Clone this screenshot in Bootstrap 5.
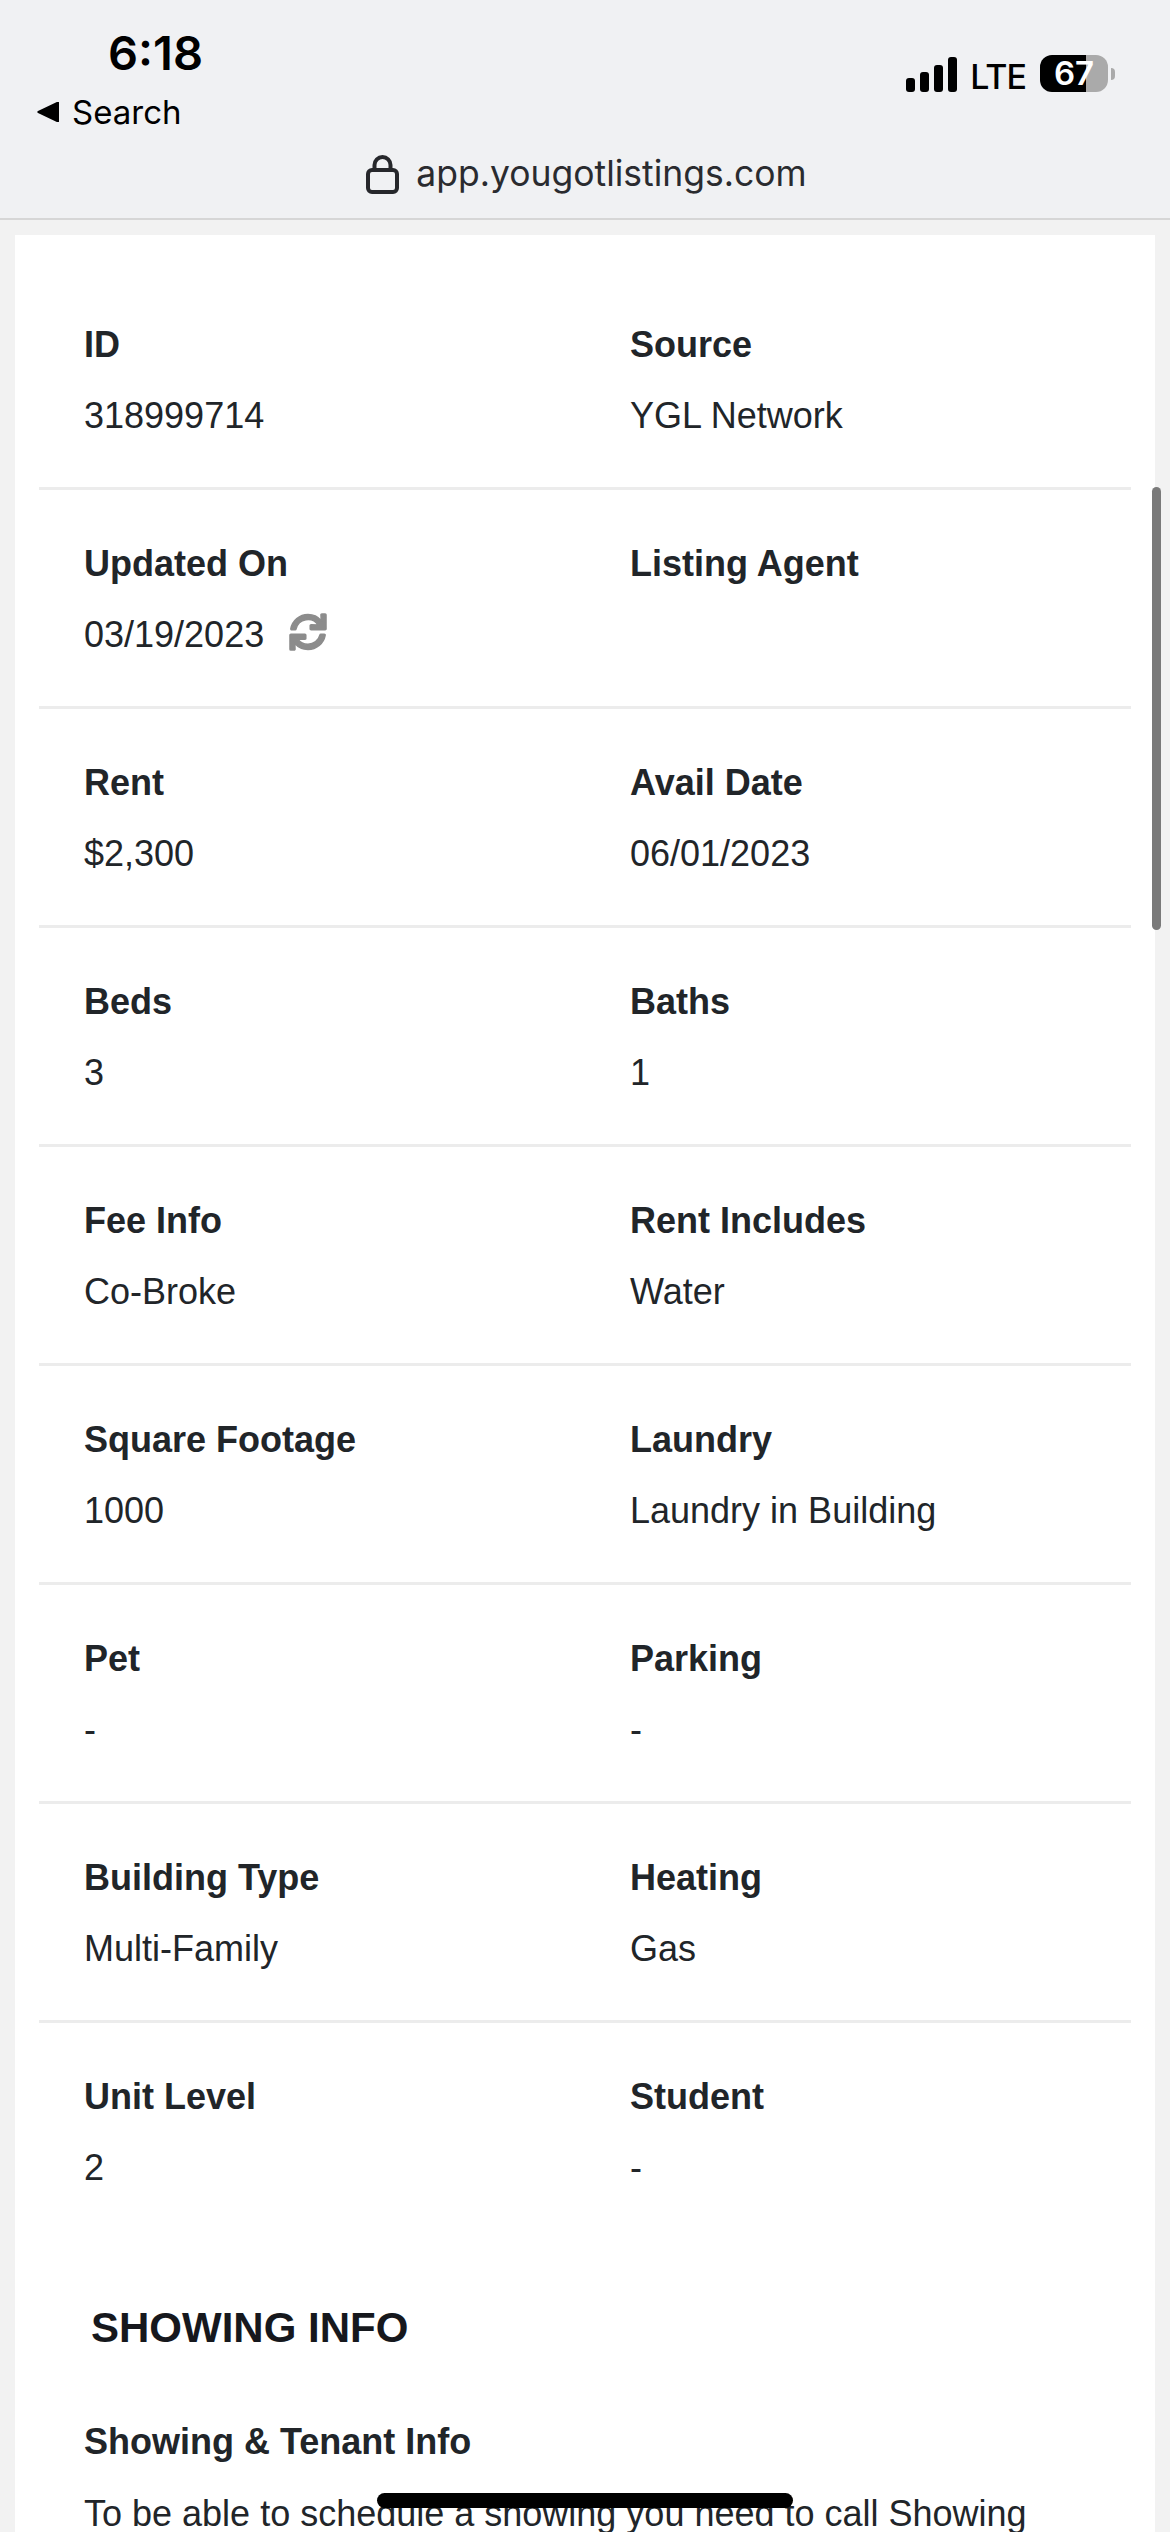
<!DOCTYPE html>
<html lang="en">
<head>
  <meta charset="UTF-8" />
  <meta name="viewport" content="width=device-width, initial-scale=1.0" />
  <title>Listing details</title>
  <link rel="stylesheet" href="https://cdn.jsdelivr.net/npm/bootstrap@5.3.2/dist/css/bootstrap.min.css">
  <style>
    html, body { height: 2532px; overflow: hidden; }
    body { background: #f2f2f2; color: #212529; font-family: "Liberation Sans", Arial, sans-serif; font-size: 36px; line-height: 53px; position: relative; }

    .phone-bar { height: 220px; background: #f0f1f3; border-bottom: 2px solid #d6d6d6; font-family: Inter, "Noto Sans", sans-serif; color: #000; }
    .status-left { padding: 27px 0 0 37px; width: 260px; }
    .clock { font-size: 47px; font-weight: 600; line-height: 52px; padding-left: 71px; }
    .back-link { font-size: 33px; font-weight: 400; line-height: 40px; margin-top: 13px; gap: 12px; }
    .status-right { padding: 55px 0 0 0; margin-right: 55px; }
    .signal-bars { margin: 2px 13px 0 0; }
    .lte-label { font-size: 34px; font-weight: 500; line-height: 37px; letter-spacing: -1px; margin: 3px 14px 0 0; }
    .battery-wrap { gap: 3px; }
    .battery-body { width: 68px; height: 37px; border-radius: 12px; background: linear-gradient(90deg, #000 0 46px, #aaa 46px); color: #fff; font-size: 33px; font-weight: 600; line-height: 37px; text-align: center; }
    .battery-nub { width: 4px; height: 12px; background: #aaa; border-radius: 0 6px 6px 0; }
    .url-line { margin-top: 22px; padding-left: 3px; gap: 17px; font-size: 35.5px; line-height: 40px; color: #2a2b2f; }

    .sheet { margin: 15px 15px 0; padding: 36px 24px 0; background: #fff; }
    .info-row { --bs-gutter-x: 0; border-bottom: 3px solid #ececec; margin: 0; padding: 47px 0 45px; }
    .info-row.no-rule { border-bottom: 0; }
    .info-cell { padding-left: 45px; }
    .info-label { font-weight: 700; margin-bottom: 18px; }
    .sync-icon { width: 36px; height: 36px; margin-left: 26px; fill: #8c8c8c; stroke: #8c8c8c; stroke-width: 22; overflow: visible; vertical-align: -3px; }

    .block-title { font-size: 42px; font-weight: 700; line-height: 50px; margin: 64px 0 0 52px; color: #16181d; }
    .block-sub { font-weight: 700; margin: 62px 0 19px 45px; }
    .block-text { margin-left: 45px; white-space: nowrap; }

    .scroll-thumb { position: absolute; left: 1152px; top: 487px; width: 9px; height: 443px; border-radius: 5px; background: #7a7a7a; }
    .home-pill { position: absolute; left: 377px; top: 2493px; width: 416px; height: 15px; border-radius: 8px; background: #000; }
  </style>
</head>
<body>
  <header class="phone-bar">
    <div class="d-flex justify-content-between">
      <div class="status-left">
        <div class="clock">6:18</div>
        <div class="back-link d-flex align-items-center">
          <svg width="23" height="20" viewBox="0 0 23 20"><path d="M22 0.5V19.5a1 1 0 0 1-1.5.8L1 11a1.2 1.2 0 0 1 0-2L20.500-.3A1 1 0 0 1 22 .5z"/></svg>
          <span>Search</span>
        </div>
      </div>
      <div class="status-right d-flex align-items-start">
        <svg class="signal-bars" width="51" height="35" viewBox="0 0 51 35">
          <rect x="0" y="21" width="9" height="14" rx="3"/>
          <rect x="14" y="15" width="9" height="20" rx="3"/>
          <rect x="28" y="8" width="9" height="27" rx="3"/>
          <rect x="42" y="0" width="9" height="35" rx="3"/>
        </svg>
        <span class="lte-label">LTE</span>
        <div class="battery-wrap d-flex align-items-center">
          <div class="battery-body">67</div>
          <div class="battery-nub"></div>
        </div>
      </div>
    </div>
    <div class="url-line d-flex justify-content-center align-items-end">
      <svg width="33" height="39" viewBox="0 0 33 39" fill="none" stroke="#26272b" stroke-width="4">
        <rect x="2" y="15" width="29" height="22" rx="4"/>
        <path d="M8.500 15V10a8 8 0 0 1 16 0v5"/>
      </svg>
      <span>app.yougotlistings.com</span>
    </div>
  </header>

  <main class="sheet">
    <div class="row info-row">
      <div class="col-6 info-cell"><div class="info-label">ID</div><div>318999714</div></div>
      <div class="col-6 info-cell"><div class="info-label">Source</div><div>YGL Network</div></div>
    </div>
    <div class="row info-row">
      <div class="col-6 info-cell">
        <div class="info-label">Updated On</div>
        <div>03/19/2023<svg class="sync-icon" viewBox="0 0 512 512"><path d="M440.65 12.57l4 82.77A247.16 247.16 0 0 0 255.83 8C134.73 8 33.91 94.92 12.29 209.82A12 12 0 0 0 24.09 224h49.05a12 12 0 0 0 11.67-9.26 175.91 175.91 0 0 1 317-56.94l-101.46-4.86a12 12 0 0 0-12.57 12v47.41a12 12 0 0 0 12 12H500a12 12 0 0 0 12-12V12a12 12 0 0 0-12-12h-47.37a12 12 0 0 0-11.98 12.57zM255.83 432a175.61 175.61 0 0 1-146-77.8l101.8 4.87a12 12 0 0 0 12.57-12v-47.4a12 12 0 0 0-12-12H12a12 12 0 0 0-12 12V500a12 12 0 0 0 12 12h47.35a12 12 0 0 0 12-12.6l-4.15-82.57A247.17 247.17 0 0 0 255.83 504c121.11 0 221.93-86.92 243.55-201.82a12 12 0 0 0-11.8-14.18h-49.05a12 12 0 0 0-11.67 9.26A175.86 175.86 0 0 1 255.83 432z"/></svg></div>
      </div>
      <div class="col-6 info-cell"><div class="info-label">Listing Agent</div><div>&nbsp;</div></div>
    </div>
    <div class="row info-row">
      <div class="col-6 info-cell"><div class="info-label">Rent</div><div>$2,300</div></div>
      <div class="col-6 info-cell"><div class="info-label">Avail Date</div><div>06/01/2023</div></div>
    </div>
    <div class="row info-row">
      <div class="col-6 info-cell"><div class="info-label">Beds</div><div>3</div></div>
      <div class="col-6 info-cell"><div class="info-label">Baths</div><div>1</div></div>
    </div>
    <div class="row info-row">
      <div class="col-6 info-cell"><div class="info-label">Fee Info</div><div>Co-Broke</div></div>
      <div class="col-6 info-cell"><div class="info-label">Rent Includes</div><div>Water</div></div>
    </div>
    <div class="row info-row">
      <div class="col-6 info-cell"><div class="info-label">Square Footage</div><div>1000</div></div>
      <div class="col-6 info-cell"><div class="info-label">Laundry</div><div>Laundry in Building</div></div>
    </div>
    <div class="row info-row">
      <div class="col-6 info-cell"><div class="info-label">Pet</div><div>-</div></div>
      <div class="col-6 info-cell"><div class="info-label">Parking</div><div>-</div></div>
    </div>
    <div class="row info-row">
      <div class="col-6 info-cell"><div class="info-label">Building Type</div><div>Multi-Family</div></div>
      <div class="col-6 info-cell"><div class="info-label">Heating</div><div>Gas</div></div>
    </div>
    <div class="row info-row no-rule">
      <div class="col-6 info-cell"><div class="info-label">Unit Level</div><div>2</div></div>
      <div class="col-6 info-cell"><div class="info-label">Student</div><div>-</div></div>
    </div>
    <div class="block-title">SHOWING INFO</div>
    <div class="block-sub">Showing &amp; Tenant Info</div>
    <div class="block-text">To be able to schedule a showing you need to call Showing</div>
  </main>

  <div class="scroll-thumb"></div>
  <div class="home-pill"></div>

  <script src="https://cdn.jsdelivr.net/npm/bootstrap@5.3.2/dist/js/bootstrap.bundle.min.js"></script>
</body>
</html>
